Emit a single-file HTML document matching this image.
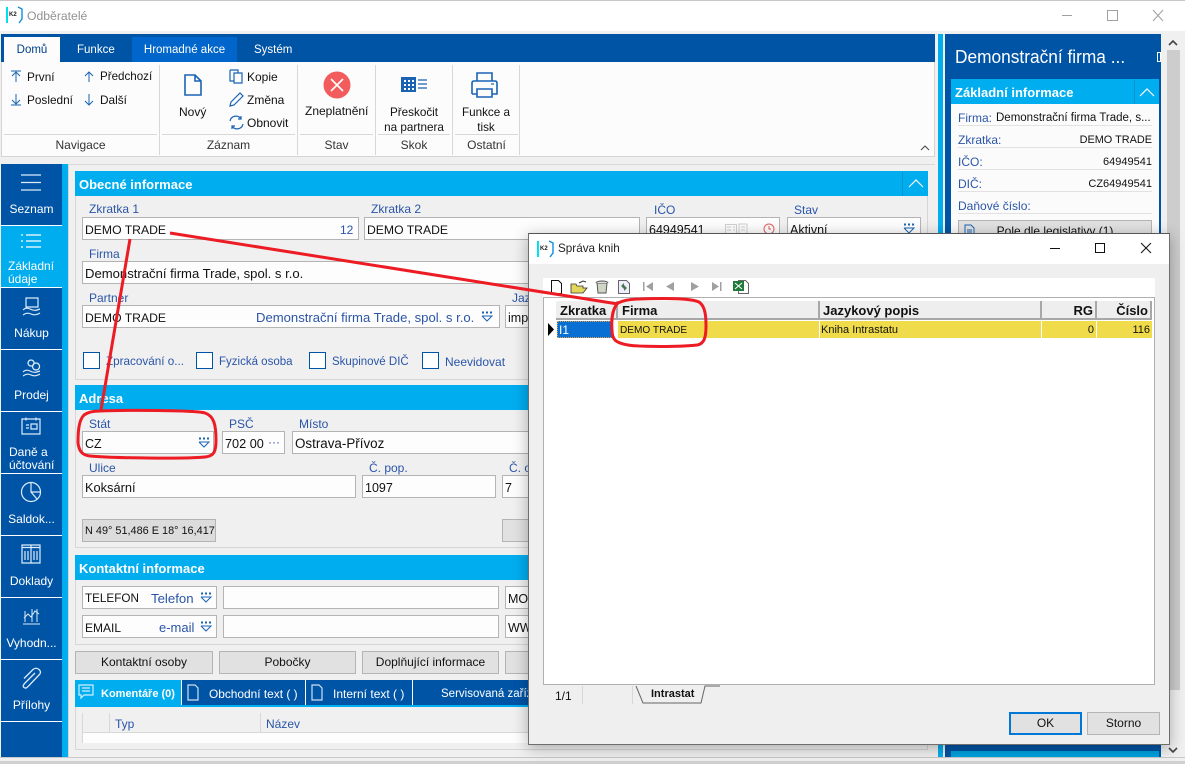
<!DOCTYPE html>
<html><head><meta charset="utf-8"><style>
html,body{margin:0;padding:0;background:#f0f0f0}
#r{position:relative;width:1185px;height:764px;overflow:hidden;background:#f0f0f0;font-family:"Liberation Sans",sans-serif;font-size:12px;color:#111}
#r div,#r svg{position:absolute}
.t{white-space:nowrap;line-height:16px}
.l{color:#2a55a8;white-space:nowrap;line-height:16px}
.w{color:#fff;white-space:nowrap;line-height:16px}
.f{background:#fdfdfd;border:1px solid #b4b4b4;box-sizing:border-box;height:23px}
.h{background:#00adef;height:25px;color:#fff;font-weight:bold;font-size:13px;line-height:27px;box-sizing:border-box;padding-left:4px;white-space:nowrap}
.b{background:#e1e1e1;border:1px solid #b4b4b4;box-sizing:border-box;height:23px;text-align:center;line-height:21px;white-space:nowrap;overflow:hidden}
.p{border:1px solid #d6d6d6;box-sizing:border-box}
.c{border:1px solid #0054a6;background:#fff;box-sizing:border-box;width:17px;height:17px}
.n{left:1px;width:61px;height:61px;background:#0054a6;color:#fff;text-align:center;font-size:12px;line-height:16px}
.m{background:#d8d8d8;width:1px}
.g{background:#d8d8d8;height:1px}
.gh{background:#eeeeee;border-right:2px solid #a8a8a8;border-bottom:2px solid #a8a8a8;box-sizing:border-box;height:19px;font-weight:bold;font-size:13px;line-height:19px;padding:0 3px;color:#111;white-space:nowrap}
.gc{background:#f0dc4a;height:17px;font-size:11px;line-height:19px;padding:0 2px;box-sizing:border-box;white-space:nowrap;border-right:1px solid #fff}
svg{overflow:visible}
</style></head><body><div id="r">

<div style="left:0;top:0;width:1185px;height:1px;background:#c8c8c8"></div>
<div style="left:0;top:1px;width:1185px;height:30px;background:#fff"></div>
<div style="left:6px;top:7px;width:1.5px;height:16px;background:#00e0ef"></div>
<div style="left:9px;top:12px;font-size:6px;font-weight:bold;line-height:6px;color:#222" class="t">K2</div>
<svg style="left:6px;top:6px" width="18" height="18"><path d="M12 1l4 2v10l-3 4" fill="none" stroke="#0d8fe0" stroke-width="1.4"/></svg>
<div class="t" style="left:27px;top:8px;font-size:12.2px;color:#929292">Odběratelé</div>
<svg style="left:1040px;top:6px" width="145" height="20" fill="none" stroke="#a0a0a0"><path d="M22 9.500h10M67.500 4.500h10v10h-10zM113 4l10 11M123 4l-10 11"/></svg>

<!-- ribbon -->
<div style="left:1px;top:34px;width:934px;height:28px;background:#0054a6"></div>
<div style="left:1px;top:62px;width:934px;height:95px;background:#fcfcfc;border:1px solid #d4d4d4;border-top:0;box-sizing:border-box"></div>
<div style="left:4px;top:37px;width:56px;height:25px;background:#fcfcfc;text-align:center;line-height:26px;font-size:11.5px;color:#003f8a">Domů</div>
<div class="w" style="left:77px;top:42px;font-size:11.5px">Funkce</div>
<div style="left:132px;top:37px;width:105px;height:25px;background:#0066cc;color:#fff;text-align:center;line-height:26px;font-size:11.5px">Hromadné akce</div>
<div class="w" style="left:254px;top:42px;font-size:11.5px">Systém</div>

<svg style="left:10px;top:70px" width="130" height="38" fill="none" stroke="#1a63b4" stroke-width="1"><path d="M1 1h10M6 12V2M2 6l4-4 4 4M1 35h10M6 24v10M2 30l4 4 4-4M79 12V2M75 6l4-4 4 4M79 24v11M75 31l4 4 4-4"/></svg>
<div class="t" style="left:27px;top:69px;font-size:11.8px">První</div>
<div class="t" style="left:27px;top:92px;font-size:11.8px">Poslední</div>
<div class="t" style="left:100px;top:69px;font-size:11.6px">Předchozí</div>
<div class="t" style="left:100px;top:92px;font-size:11.8px">Další</div>
<div class="m" style="left:159px;top:65px;height:90px"></div>
<svg style="left:184px;top:74px" width="18" height="22" fill="none" stroke="#1a63b4" stroke-width="1.6"><path d="M1 1h10l6 6v14H1zM11 1v6h6"/></svg>
<div class="t" style="left:179px;top:104px">Nový</div>
<svg style="left:229px;top:69px" width="20" height="64" fill="none" stroke="#1a63b4" stroke-width="1.2"><path d="M1 1h8v3M1 1v11h4M5 4h8v10H5zM1 37l1-4 9-9 3 3-9 9zM1 52a6 6 0 0 1 11-2M14 55a6 6 0 0 1-11 2M12 47v3h-3M3 60v-3h3"/></svg>
<div class="t" style="left:247px;top:69px">Kopie</div>
<div class="t" style="left:247px;top:92px">Změna</div>
<div class="t" style="left:247px;top:115px">Obnovit</div>
<div class="m" style="left:297px;top:65px;height:90px"></div>
<svg style="left:323px;top:71px" width="28" height="28"><circle cx="14" cy="14" r="13.500" fill="#f25c5c"/><path d="M8 8l12 12M20 8L8 20" stroke="#fff" stroke-width="1.6"/></svg>
<div class="t" style="left:305px;top:103px">Zneplatnění</div>
<div class="m" style="left:375px;top:65px;height:90px"></div>
<svg style="left:400px;top:76px" width="28" height="16"><path d="M1 1h15v15H1z" fill="#1a63b4"/><path d="M4 4h2v2H4zM8 4h2v2H8zM12 4h2v2h-2zM4 8h2v2H4zM8 8h2v2H8zM12 8h2v2h-2zM4 12h2v2H4zM8 12h2v2H8zM12 12h2v2h-2z" fill="#fff"/><path d="M18 4h9M18 8h9M18 12h9" stroke="#1a63b4" stroke-width="1.2"/></svg>
<div class="t" style="left:376px;top:105px;width:76px;text-align:center;line-height:15px;white-space:normal;font-size:11.7px">Přeskočit<br>na partnera</div>
<div class="m" style="left:452px;top:65px;height:90px"></div>
<svg style="left:471px;top:72px" width="28" height="26" fill="none" stroke="#1a63b4" stroke-width="1.6"><path d="M6 9V1h15v8M1 22V11q0-2 2-2h21q2 0 2 2v11h-5M6 22H1M6 17h15v8H6z"/><path d="M20 12h3" stroke-width="1.2"/></svg>
<div class="t" style="left:453px;top:105px;width:66px;text-align:center;line-height:15px;white-space:normal;font-size:11.7px">Funkce a<br>tisk</div>
<div class="m" style="left:519px;top:65px;height:90px"></div>
<div class="g" style="left:4px;top:134px;width:153px"></div>
<div class="g" style="left:162px;top:134px;width:133px"></div>
<div class="g" style="left:300px;top:134px;width:73px"></div>
<div class="g" style="left:378px;top:134px;width:72px"></div>
<div class="g" style="left:455px;top:134px;width:63px"></div>
<div class="t" style="left:4px;top:137px;width:153px;text-align:center;color:#333">Navigace</div>
<div class="t" style="left:162px;top:137px;width:133px;text-align:center;color:#333">Záznam</div>
<div class="t" style="left:300px;top:137px;width:73px;text-align:center;color:#333">Stav</div>
<div class="t" style="left:378px;top:137px;width:72px;text-align:center;color:#333">Skok</div>
<div class="t" style="left:455px;top:137px;width:63px;text-align:center;color:#333">Ostatní</div>
<svg style="left:920px;top:145px" width="10" height="6" fill="none" stroke="#444"><path d="M1 5l4-4 4 4"/></svg>

<!-- left nav -->
<div style="left:1px;top:164px;width:61px;height:593px;background:#0054a6"></div>
<div style="left:62px;top:164px;width:6px;height:593px;background:#00adef"></div>
<div style="left:68px;top:164px;width:1px;height:593px;background:#d8d8d8"></div>
<div class="n" style="top:164px;height:61px"><div style="left:0;width:61px;top:37px">Seznam</div></div>
<div class="n" style="top:226px;height:61px;background:#00adef"><div style="left:7px;top:34px;text-align:left;line-height:13px">Základní<br>údaje</div></div>
<div class="n" style="top:288px"><div style="left:0;width:61px;top:37px">Nákup</div></div>
<div class="n" style="top:350px"><div style="left:0;width:61px;top:37px">Prodej</div></div>
<div class="n" style="top:412px"><div style="left:8px;top:34px;text-align:left;line-height:13px">Daně a<br>účtování</div></div>
<div class="n" style="top:474px"><div style="left:0;width:61px;top:37px">Saldok...</div></div>
<div class="n" style="top:536px"><div style="left:0;width:61px;top:37px">Doklady</div></div>
<div class="n" style="top:598px"><div style="left:0;width:61px;top:37px">Vyhodn...</div></div>
<div class="n" style="top:660px"><div style="left:0;width:61px;top:37px">Přílohy</div></div>
<svg style="left:0;top:160px" width="62" height="600" fill="none" stroke="#dcecf8" stroke-width="1.2">
<path d="M21 15h20M21 22.500h20M21 30h20"/>
<path d="M21 75h2M26 75h15M21 81h2M26 81h15M21 87h2M26 87h15" stroke="#fff"/>
<path d="M26 138h12v9H26zM23 150q3-3 7-1t7 1l3-1M23 155q4-3 8-1t9-1"/>
<path d="M31 200a3 3 0 1 0 .1 0M36 203a3.500 3.500 0 1 0 .1 0M23 212q3-3 7-1t7 1l3-1M23 216q4-3 8-1t9-1"/>
<path d="M22 259h18v15H22zM26 257.500v3M36 257.500v3M26 265h3M26 268h3M31 264h6v5h-6z"/>
<circle cx="31" cy="332" r="9.500"/><path d="M31 322v10l6 7M31 332h9"/>
<path d="M22 385h18v18H22zM22 387.500h18M31 385v18M25 391v9M28 391v9M34 391v9M37 391v9"/>
<path d="M23 464h17M24 458l4-4 3 3 4-6 4 3M25 451v11M32 449v13M37 449v13" stroke-width="1"/>
<path d="M35 513l-10 10q-3 3-1 4.500t4-1l11-11.500q3-3 0-5.500t-6 0l-9 9" stroke-width="1.300"/>
</svg>
<div style="left:1px;top:225px;width:61px;height:1px;background:#fff"></div>
<div style="left:1px;top:287px;width:61px;height:1px;background:#fff"></div>
<div style="left:1px;top:349px;width:61px;height:1px;background:#fff"></div>
<div style="left:1px;top:411px;width:61px;height:1px;background:#fff"></div>
<div style="left:1px;top:473px;width:61px;height:1px;background:#fff"></div>
<div style="left:1px;top:535px;width:61px;height:1px;background:#fff"></div>
<div style="left:1px;top:597px;width:61px;height:1px;background:#fff"></div>
<div style="left:1px;top:659px;width:61px;height:1px;background:#fff"></div>
<div style="left:1px;top:721px;width:61px;height:1px;background:#fff"></div>

<!-- general -->
<div style="left:69px;top:164px;width:866px;height:1px;background:#d8d8d8"></div>
<div class="p" style="left:75px;top:171px;width:853px;height:209px"></div>
<div class="h" style="left:75px;top:171px;width:853px">Obecné informace</div>
<div style="left:902px;top:172px;width:1px;height:24px;background:#0a93cc"></div>
<svg style="left:908px;top:179px" width="16" height="9" fill="none" stroke="#fff" stroke-width="1.2"><path d="M1 8l7-7 7 7"/></svg>

<div class="l" style="left:89px;top:201px">Zkratka 1</div>
<div class="f" style="left:82px;top:217px;width:277px"></div>
<div class="t" style="left:85px;top:222px;font-size:12.2px">DEMO TRADE</div>
<div class="l" style="left:340px;top:222px">12</div>
<div class="l" style="left:371px;top:201px">Zkratka 2</div>
<div class="f" style="left:364px;top:217px;width:276px"></div>
<div class="t" style="left:367px;top:222px;font-size:12.2px">DEMO TRADE</div>
<div class="l" style="left:654px;top:202px">IČO</div>
<div class="f" style="left:646px;top:217px;width:134px"></div>
<div class="t" style="left:649px;top:222px;font-size:12.5px">64949541</div>
<svg style="left:725px;top:223px" width="52" height="12" fill="none" stroke="#d0d0d0"><path d="M.5 1.500h11v9H.5zM2 4h4M2 7h4M8 4h2M8 7h2M14 1h8v10h-8zM16 4h4M16 7h4"/><circle cx="44" cy="6" r="5" stroke="#e06060"/><path d="M44 3v3h2" stroke="#e06060"/></svg>
<div class="l" style="left:794px;top:202px">Stav</div>
<div class="f" style="left:787px;top:217px;width:134px"></div>
<div class="t" style="left:790px;top:222px;font-size:12.5px">Aktivní</div>
<svg style="left:903px;top:223px" width="12" height="11" fill="none" stroke="#1a63b4"><path d="M1 1.500h2M5 1.500h2M9 1.500h2" stroke-width="2"/><path d="M1 5l5 5 5-5H1"/></svg>

<div class="l" style="left:89px;top:246px">Firma</div>
<div class="f" style="left:82px;top:261px;width:700px"></div>
<div class="t" style="left:85px;top:266px;font-size:13.1px">Demonstrační firma Trade, spol. s r.o.</div>
<div class="l" style="left:89px;top:290px">Partner</div>
<div class="f" style="left:82px;top:305px;width:418px"></div>
<div class="t" style="left:85px;top:310px;font-size:12.2px">DEMO TRADE</div>
<div class="l" style="left:256px;top:310px;font-size:13.1px">Demonstrační firma Trade, spol. s r.o.</div>
<svg style="left:481px;top:311px" width="14" height="11" fill="none" stroke="#1a63b4"><path d="M1 1.500h2M5 1.500h2M9 1.500h2" stroke-width="2"/><path d="M1 5l5 5 5-5H1"/></svg>
<div class="l" style="left:512px;top:290px">Jazyk</div>
<div class="f" style="left:505px;top:305px;width:200px"></div>
<div class="t" style="left:508px;top:310px;font-size:12.5px">import</div>

<div class="c" style="left:83px;top:352px"></div><div class="l" style="left:106px;top:354px;font-size:11.7px">Zpracování o...</div>
<div class="c" style="left:196px;top:352px"></div><div class="l" style="left:219px;top:354px;font-size:11.5px">Fyzická osoba</div>
<div class="c" style="left:309px;top:352px"></div><div class="l" style="left:332px;top:354px;font-size:11.5px">Skupinové DIČ</div>
<div class="c" style="left:422px;top:352px"></div><div class="l" style="left:445px;top:354px;font-size:12px">Neevidovat</div>

<!-- address -->
<div class="p" style="left:75px;top:385px;width:853px;height:163px"></div>
<div class="h" style="left:75px;top:385px;width:853px">Adresa</div>
<div class="l" style="left:89px;top:416px">Stát</div>
<div class="f" style="left:82px;top:431px;width:132px"></div>
<div class="t" style="left:85px;top:436px;font-size:12.5px">CZ</div>
<svg style="left:198px;top:437px" width="14" height="11" fill="none" stroke="#1a63b4"><path d="M1 1.500h2M5 1.500h2M9 1.500h2" stroke-width="2"/><path d="M1 5l5 5 5-5H1"/></svg>
<div class="l" style="left:229px;top:416px">PSČ</div>
<div class="f" style="left:222px;top:431px;width:63px"></div>
<div class="t" style="left:225px;top:436px;font-size:12.7px">702 00</div>
<div class="l" style="left:268px;top:434px">···</div>
<div class="l" style="left:299px;top:416px">Místo</div>
<div class="f" style="left:292px;top:431px;width:300px"></div>
<div class="t" style="left:295px;top:436px;font-size:13.4px">Ostrava-Přívoz</div>
<div class="l" style="left:89px;top:460px">Ulice</div>
<div class="f" style="left:82px;top:475px;width:274px"></div>
<div class="t" style="left:85px;top:480px;font-size:12.8px">Koksární</div>
<div class="l" style="left:369px;top:460px">Č. pop.</div>
<div class="f" style="left:362px;top:475px;width:134px"></div>
<div class="t" style="left:365px;top:480px;font-size:12.5px">1097</div>
<div class="l" style="left:509px;top:460px">Č. or.</div>
<div class="f" style="left:502px;top:475px;width:134px"></div>
<div class="t" style="left:505px;top:480px;font-size:12.5px">7</div>
<div style="left:82px;top:519px;width:134px;height:23px;background:#dcdcdc;border:1px solid #b4b4b4;box-sizing:border-box;font-size:10.9px;line-height:23px;padding-left:2px;white-space:nowrap;overflow:hidden">N 49° 51,486 E 18° 16,417</div>
<div class="b" style="left:502px;top:519px;width:134px"></div>

<!-- contact -->
<div class="p" style="left:75px;top:555px;width:853px;height:90px"></div>
<div class="h" style="left:75px;top:555px;width:853px">Kontaktní informace</div>
<div class="f" style="left:82px;top:586px;width:135px"></div>
<div class="t" style="left:85px;top:591px;font-size:11.7px">TELEFON</div>
<div class="l" style="left:151px;top:591px;font-size:13.2px">Telefon</div>
<svg style="left:200px;top:592px" width="14" height="11" fill="none" stroke="#1a63b4"><path d="M1 1.500h2M5 1.500h2M9 1.500h2" stroke-width="2"/><path d="M1 5l5 5 5-5H1"/></svg>
<div class="f" style="left:223px;top:586px;width:276px"></div>
<div class="f" style="left:505px;top:586px;width:100px"></div>
<div class="t" style="left:508px;top:591px;font-size:12.5px">MOBIL</div>
<div class="f" style="left:82px;top:615px;width:135px"></div>
<div class="t" style="left:85px;top:620px;font-size:12px">EMAIL</div>
<div class="l" style="left:159px;top:620px;font-size:13px">e-mail</div>
<svg style="left:200px;top:621px" width="14" height="11" fill="none" stroke="#1a63b4"><path d="M1 1.500h2M5 1.500h2M9 1.500h2" stroke-width="2"/><path d="M1 5l5 5 5-5H1"/></svg>
<div class="f" style="left:223px;top:615px;width:276px"></div>
<div class="f" style="left:505px;top:615px;width:100px"></div>
<div class="t" style="left:508px;top:620px;font-size:12.5px">WWW</div>

<div class="b" style="left:75px;top:651px;width:138px">Kontaktní osoby</div>
<div class="b" style="left:219px;top:651px;width:137px">Pobočky</div>
<div class="b" style="left:362px;top:651px;width:137px">Doplňující informace</div>
<div class="b" style="left:505px;top:651px;width:137px"></div>

<div style="left:75px;top:680px;width:853px;height:25px;background:#0054a6"></div>
<div style="left:75px;top:705px;width:853px;height:2px;background:#00adef"></div>
<div style="left:75px;top:680px;width:106px;height:25px;background:#00adef"></div>
<div class="w" style="left:101px;top:686px;font-weight:bold;font-size:11px">Komentáře (0)</div>
<div style="left:181px;top:680px;width:1px;height:25px;background:#fff"></div>
<div class="w" style="left:209px;top:686px;font-size:11.9px">Obchodní text ( )</div>
<div style="left:305px;top:680px;width:1px;height:25px;background:#fff"></div>
<div class="w" style="left:333px;top:686px;font-size:12px">Interní text ( )</div>
<div style="left:412px;top:680px;width:1px;height:25px;background:#fff"></div>
<div class="w" style="left:441px;top:686px;font-size:11.5px">Servisovaná zařízení</div>
<svg style="left:78px;top:684px" width="16" height="17" fill="none" stroke="#cfeefc" stroke-width="1.2"><path d="M1 1h14v10H6l-3 3v-3H1zM4 4h8M4 7h8"/></svg>
<svg style="left:187px;top:684px" width="12" height="17" fill="none" stroke="#cfe0f2" stroke-width="1.2"><path d="M1 1h7l3 3v12H1z"/></svg>
<svg style="left:311px;top:684px" width="12" height="17" fill="none" stroke="#cfe0f2" stroke-width="1.2"><path d="M1 1h7l3 3v12H1z"/></svg>

<div style="left:82px;top:713px;width:846px;height:30px;background:#fdfdfd"></div>
<div style="left:82px;top:713px;width:846px;height:20px;background:#f0f0f0;border-bottom:1px solid #d8d8d8;box-sizing:border-box"></div>
<div class="m" style="left:82px;top:713px;height:30px"></div>
<div class="m" style="left:109px;top:713px;height:20px"></div>
<div class="m" style="left:260px;top:713px;height:20px"></div>
<div class="l" style="left:115px;top:716px">Typ</div>
<div class="l" style="left:266px;top:716px">Název</div>
<div class="p" style="left:75px;top:707px;width:853px;height:43px;border-top:0;background:transparent"></div>
<div style="left:0;top:757px;width:1185px;height:1px;background:#c8c8c8"></div>
<div style="left:0;top:761px;width:1185px;height:3px;background:#d0d0d0"></div>

<!-- right panel -->
<div style="left:938px;top:34px;width:5px;height:723px;background:#00adef"></div>
<div style="left:945px;top:34px;width:216px;height:723px;background:#0054a6"></div>
<div class="w" style="left:955px;top:45px;font-size:18.5px;line-height:24px;transform:scaleX(.935);transform-origin:0 0">Demonstrační firma ...</div>
<div style="left:1157px;top:52px;width:4px;height:10px;border:1px solid #fff;box-sizing:border-box"></div>
<div style="left:951px;top:104px;width:208px;height:650px;background:#fbfbfb"></div>
<div class="h" style="left:951px;top:79px;width:208px;background:#00adef">Základní informace</div>
<div style="left:1134px;top:80px;width:1px;height:24px;background:#0a93cc"></div>
<svg style="left:1139px;top:88px" width="16" height="9" fill="none" stroke="#fff" stroke-width="1.2"><path d="M1 8l7-7 7 7"/></svg>
<div class="l" style="left:958px;top:110px">Firma:</div><div class="t" style="left:996px;top:110px;font-size:11.5px">Demonstrační firma Trade, s...</div>
<div class="l" style="left:958px;top:132px">Zkratka:</div><div class="t" style="right:33px;top:132px;font-size:10.9px">DEMO TRADE</div>
<div class="l" style="left:958px;top:154px">IČO:</div><div class="t" style="right:33px;top:154px;font-size:11px">64949541</div>
<div class="l" style="left:958px;top:176px">DIČ:</div><div class="t" style="right:33px;top:176px;font-size:11px">CZ64949541</div>
<div class="l" style="left:958px;top:198px">Daňové číslo:</div>
<div class="g" style="left:958px;top:125px;width:194px;background:#e2e2e2"></div>
<div class="g" style="left:958px;top:147px;width:194px;background:#e2e2e2"></div>
<div class="g" style="left:958px;top:169px;width:194px;background:#e2e2e2"></div>
<div class="g" style="left:958px;top:191px;width:194px;background:#e2e2e2"></div>
<div class="g" style="left:958px;top:213px;width:194px;background:#e2e2e2"></div>
<div class="b" style="left:958px;top:220px;width:194px;line-height:21px">Pole dle legislativy (1)</div>
<svg style="left:964px;top:224px" width="12" height="12" fill="none" stroke="#1a63b4"><path d="M1 1h6l3 3v8H1zM3 6h5M3 8h5"/></svg>
<div style="left:951px;top:745px;width:208px;height:12px;background:#00a2dc"></div>
<div style="left:951px;top:745px;width:208px;height:6px;background:#0054a6"></div>
<div style="left:1166px;top:34px;width:14px;height:723px;background:#f0f0f0"></div>
<div style="left:1167px;top:50px;width:13px;height:640px;background:#cdcdcd"></div>
<svg style="left:1168px;top:40px" width="10" height="6" fill="none" stroke="#444" stroke-width="1.6"><path d="M1 5l4-4 4 4"/></svg>
<svg style="left:1168px;top:747px" width="10" height="6" fill="none" stroke="#444" stroke-width="1.6"><path d="M1 1l4 4 4-4"/></svg>

<!-- dialog -->
<div style="left:528px;top:233px;width:642px;height:512px;background:#efefef;border:1px solid #6e6e6e;border-top-color:#555;box-sizing:border-box;box-shadow:0 3px 14px rgba(0,0,0,.3)"></div>
<div style="left:529px;top:234px;width:640px;height:30px;background:#fff"></div>
<div style="left:537px;top:241px;width:1.5px;height:16px;background:#00e0ef"></div>
<div style="left:540px;top:246px;font-size:6px;font-weight:bold;line-height:6px;color:#222" class="t">K2</div>
<svg style="left:537px;top:240px" width="18" height="18"><path d="M12 1l4 2v10l-3 4" fill="none" stroke="#0d8fe0" stroke-width="1.4"/></svg>
<div class="t" style="left:558px;top:241px;font-size:11.7px;color:#222">Správa knih</div>
<svg style="left:1050px;top:242px" width="110" height="16" fill="none" stroke="#111"><path d="M0 6.500h10M45.500 1.500h9v9h-9zM91 1l10 10M101 1L91 11"/></svg>

<div style="left:543px;top:278px;width:612px;height:19px;background:#fff"></div>
<svg style="left:549px;top:279px" width="200" height="16">
<path d="M2.500 1.500h7l3 3v10h-10z" fill="#fff" stroke="#111"/>
<path d="M22 14V5h5l1 2h6v2h4l-4 5H22z" fill="#e4d65a" stroke="#333" stroke-width=".8"/>
<path d="M30 4l4-2 3 1" fill="none" stroke="#333"/>
<path d="M48 4h10l-1 10h-8z" fill="#cfd6c4" stroke="#555"/><path d="M47 4a6 2 0 0 1 12 0" fill="#ddd" stroke="#555"/>
<path d="M69.500 1.500h8l3 3v10h-11z" fill="#eef" stroke="#666"/><path d="M72 7l3-3v6zM78 9l-3 3V6z" fill="#4a7a4a"/>
<path d="M94 3h1.500v9H94zM104 3v9l-7-4.500zM125 3v9l-8-4.500zM142 3v9l8-4.500zM163 3v9l7-4.500zM171 3h1.500v9H171z" fill="#a0a0a0"/>
<path d="M189.500 1.500h7l3 3v10h-10z" fill="#fff" stroke="#666"/><path d="M184 2h11v10h-11z" fill="#1f7a3a"/><path d="M186 4l7 6M193 4l-7 6" stroke="#fff"/>
</svg>

<div style="left:543px;top:297px;width:612px;height:388px;background:#fff;border:1px solid #b0b0b0;box-sizing:border-box"></div>
<div class="gh" style="left:556px;top:301px;width:62px;padding:0 0 0 4px">Zkratka</div>
<div class="gh" style="left:618px;top:301px;width:202px;padding-left:4px">Firma</div>
<div class="gh" style="left:820px;top:301px;width:222px">Jazykový popis</div>
<div class="gh" style="left:1042px;top:301px;width:55px;text-align:right;padding-right:2px">RG</div>
<div class="gh" style="left:1097px;top:301px;width:55px;text-align:right;padding-right:2px">Číslo</div>
<div style="left:557px;top:321px;width:56px;height:17px;background:#0a6fd2;color:#fff;font-size:12px;line-height:17px;padding-left:1px;box-sizing:border-box;border:1px dotted #e8a040">I1</div>
<div class="gc" style="left:618px;top:321px;width:202px;font-size:10.1px">DEMO TRADE</div>
<div class="gc" style="left:820px;top:321px;width:222px;padding-left:1px">Kniha Intrastatu</div>
<div class="gc" style="left:1042px;top:321px;width:55px;text-align:right">0</div>
<div class="gc" style="left:1097px;top:321px;width:55px;text-align:right;border:0">116</div>
<svg style="left:547px;top:323px" width="8" height="13"><path d="M1 0l6 6.500-6 6.500z" fill="#000"/></svg>

<div class="t" style="left:555px;top:688px">1/1</div>
<div class="m" style="left:582px;top:686px;height:18px"></div>
<div class="m" style="left:632px;top:686px;height:18px"></div>
<svg style="left:635px;top:685px" width="90" height="19" fill="none" stroke="#666"><path d="M1 1l7 17h58l4-17h15"/></svg>
<div class="t" style="left:651px;top:686px;font-weight:bold;font-size:11px">Intrastat</div>

<div class="b" style="left:1009px;top:712px;width:73px;border:2px solid #0078d7;line-height:19px">OK</div>
<div class="b" style="left:1087px;top:712px;width:73px;line-height:21px">Storno</div>

<!-- annotations -->
<svg style="left:0;top:0" width="1185" height="764" fill="none" stroke="#ed1c24" stroke-width="3">
<path d="M130 239L101 410"/>
<path d="M170 233L618 304"/>
<path d="M100 411C125 410 195 410 205 413C214 416 216 425 216 440C216 452 214 456 205 457C185 459 110 458 90 456C81 455 79 450 78 443C78 430 79 420 84 415C88 412 94 411 100 411z"/>
<path d="M640 299C665 298 690 298 699 302C705 306 706 315 706 326C706 338 704 344 697 345C680 347 640 347 628 345C616 343 612 340 612 330C611 318 613 308 618 303C624 300 632 299 640 299z"/>
</svg>
</div></body></html>
